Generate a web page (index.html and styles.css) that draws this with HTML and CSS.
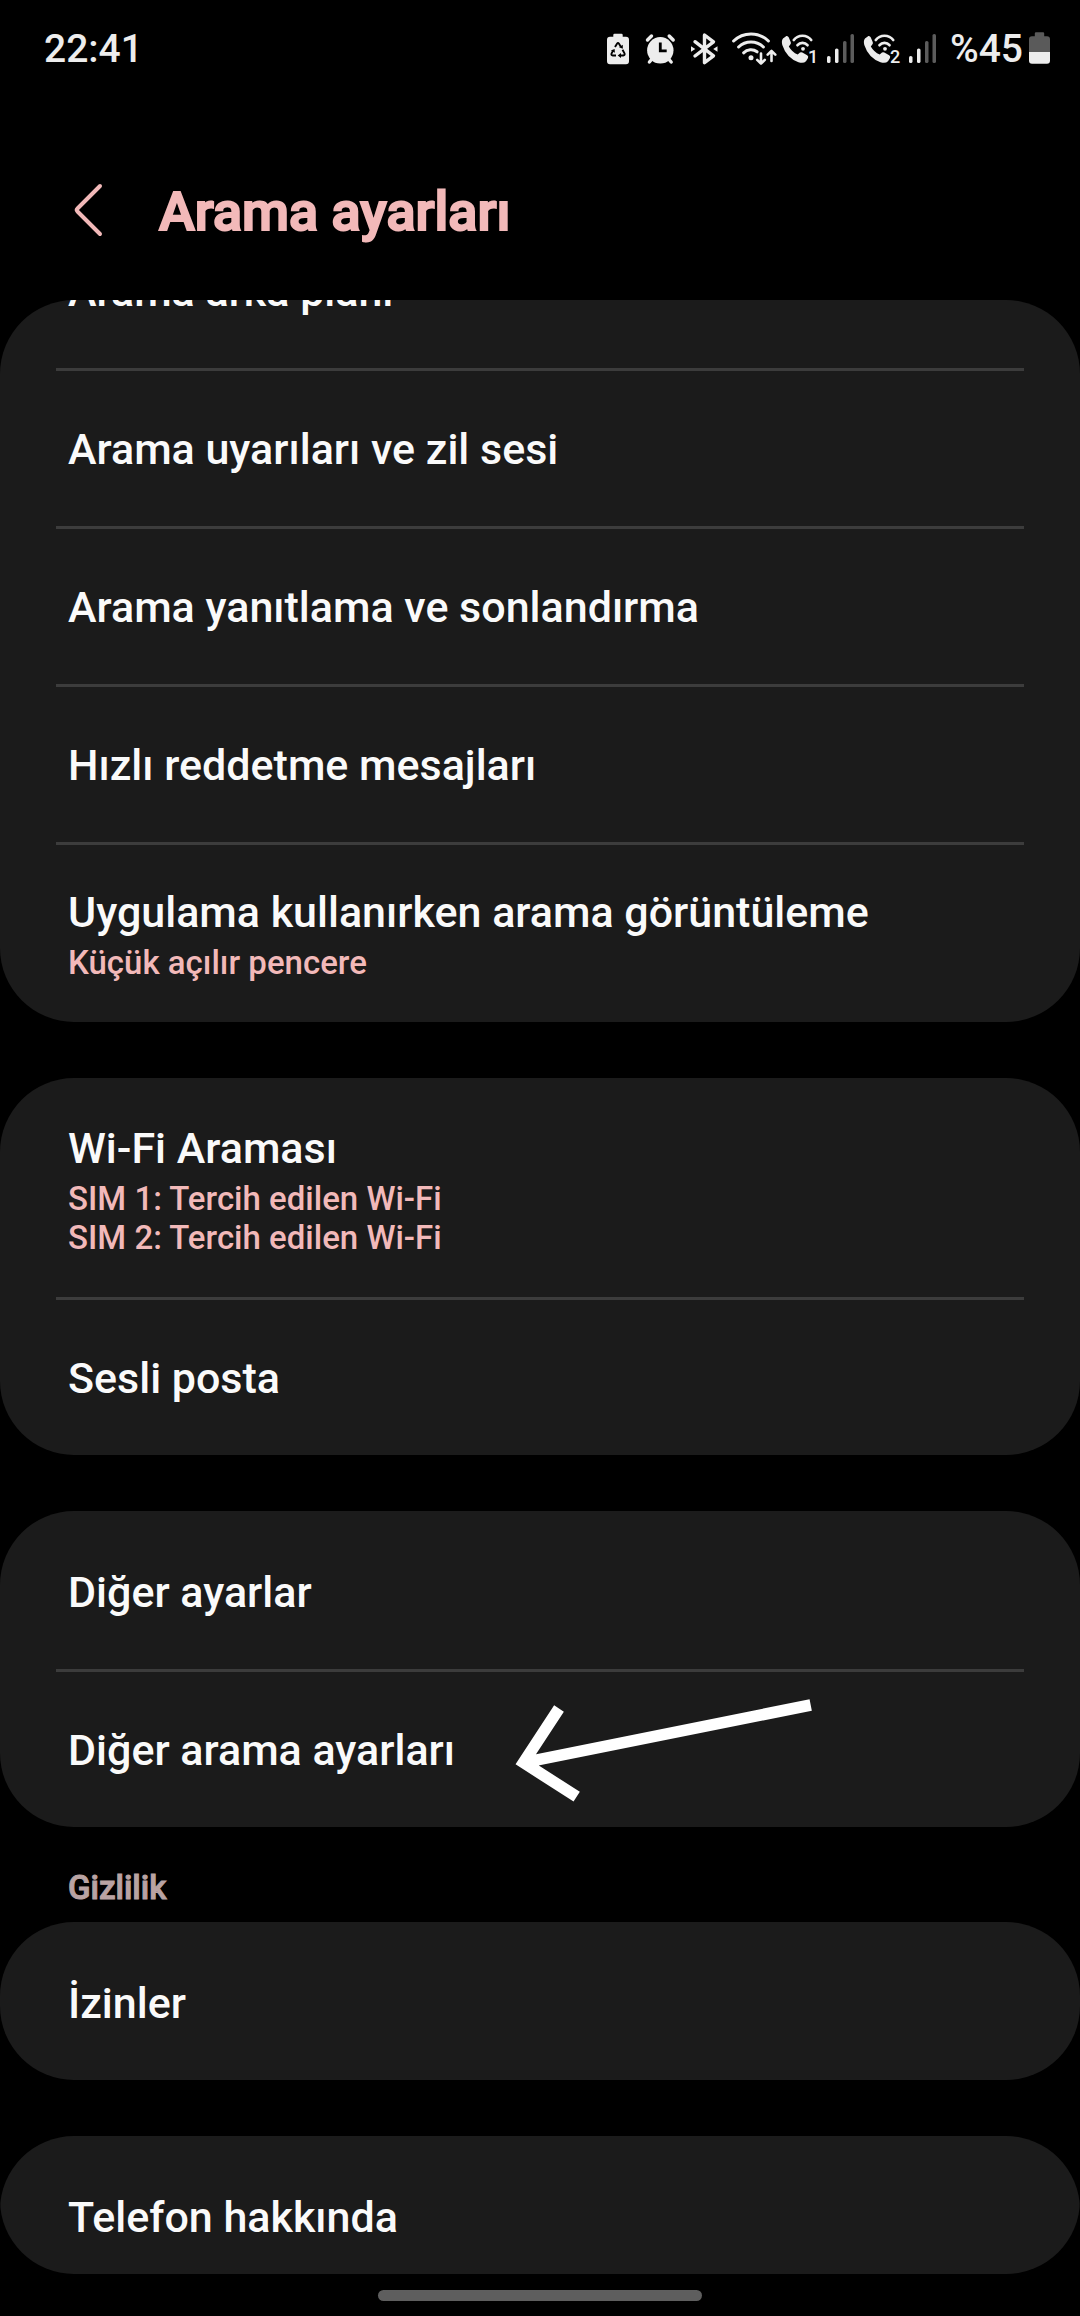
FILE: index.html
```html
<!DOCTYPE html>
<html lang="tr">
<head>
<meta charset="utf-8">
<meta name="viewport" content="width=device-width, initial-scale=1">
<title>Arama ayarları</title>
<link rel="stylesheet" href="styles.css">
</head>
<body>
<svg class="symbols" aria-hidden="true">
  <symbol id="signal" viewBox="0 0 40 40">
    <rect x="5" y="28" width="3.5" height="7" rx="1.6" fill="#ededed"/>
    <rect x="13" y="20.5" width="3.5" height="14.5" rx="1.6" fill="#ededed"/>
    <rect x="21" y="13" width="3.5" height="22" rx="1.6" fill="#5c5c5c"/>
    <rect x="28.5" y="6" width="3.5" height="29" rx="1.6" fill="#5c5c5c"/>
  </symbol>
  <symbol id="wifi-call" viewBox="0 0 42 40">
    <path fill="#ededed" d="M3 10.5 6.4 8Q8 7.600 8.800 9.500L10.800 14.200Q11.200 15.500 10.300 16.500L8.800 18.400Q12 24 17.700 26.500L20 24.600Q21 23.900 22.300 24.500L27.200 27.300Q28.800 28.500 28 30L26 33.300Q23.500 35.800 18.500 34.200 6.500 30 2.300 17 1.200 12.500 3 10.500Z"/>
    <g fill="none" stroke="#ededed" stroke-width="2.700" stroke-linecap="round">
      <path d="M13.800 12a11 11 0 0 1 17.400 0"/>
      <path d="M17.500 17.200a6.600 6.600 0 0 1 10 0"/>
    </g>
    <circle cx="23" cy="20.800" r="1.900" fill="#ededed"/>
  </symbol>
</svg>

<header class="status">
  <time class="status-text">22:41</time>
  <div class="status-icons">
    <svg width="40" height="40" viewBox="0 0 40 40" aria-label="Pil koruma">
      <path fill="#ededed" d="M16.500 5.700h7a1.200 1.200 0 0 1 1.200 1.200v1.800H28a3 3 0 0 1 3 3V33.300a3 3 0 0 1-3 3H12a3 3 0 0 1-3-3V11.700a3 3 0 0 1 3-3h3.300V6.900a1.200 1.200 0 0 1 1.200-1.200Z"/>
      <g fill="none" stroke="#000" stroke-width="1.900">
        <path d="M17 19l2-3.300q1-1.400 2 0l1.800 3"/>
        <path d="M24.500 21.800l2 3.500q.7 2-1.300 2.200h-3.200"/>
        <path d="M18 27.500h-3.200q-2-.2-1.200-2.200l1.700-3"/>
      </g>
      <path d="M24.800 16.800v4l-3.700-1.600ZM23 25v5l-3.300-2.500ZM12.900 22.600l3.700-1.600.3 3.700Z"/>
    </svg>
    <svg width="44" height="40" viewBox="0 0 44 40" aria-label="Alarm">
      <circle cx="22.300" cy="22.300" r="13.200" fill="#ededed"/>
      <path stroke="#ededed" stroke-width="3.400" stroke-linecap="round" d="M9.500 12l4-4M31.200 8l4 4M14 31l-2.600 3M30.600 31l2.600 3"/>
      <path fill="none" stroke="#000" stroke-width="2.800" d="M22.300 14.500v8.300h6.400"/>
    </svg>
    <svg width="44" height="40" viewBox="0 0 44 40" aria-label="Bluetooth">
      <path fill="none" stroke="#ededed" stroke-width="3.400" stroke-linecap="round" stroke-linejoin="round" d="M13 13.700 31.500 27.800 22.500 34.700V7L31.500 13.800 13 28"/>
      <path fill="#ededed" d="M9 18.300l4.300 2.700L9 23.700ZM35.500 18.300 31.200 21l4.300 2.700Z"/>
    </svg>
    <svg width="54" height="40" viewBox="0 0 54 40" aria-label="Wi-Fi">
      <g fill="none" stroke="#ededed" stroke-width="3" stroke-linecap="round">
        <path d="M7.600 13a25 25 0 0 1 34.800 0"/>
        <path d="M12.600 19a17.800 17.800 0 0 1 24.800 0"/>
        <path d="M17.600 24.800a10.600 10.600 0 0 1 13.500-1"/>
      </g>
      <circle cx="25" cy="29.700" r="2.500" fill="#ededed"/>
      <path fill="none" stroke="#ededed" stroke-width="2.600" stroke-linecap="round" stroke-linejoin="round" d="M35 25.500V35.500M31.200 31.800l3.800 3.800 3.800-3.800M45.500 33V23M41.700 26.700l3.800-3.800 3.800 3.800"/>
    </svg>
    <svg width="42" height="40" viewBox="0 0 42 40" aria-label="Wi-Fi araması 1">
      <use href="#wifi-call" width="42" height="40"/>
      <text class="sim" x="28" y="35">1</text>
    </svg>
    <svg width="40" height="40" aria-label="Sinyal 1"><use href="#signal" width="40" height="40"/></svg>
    <svg width="42" height="40" viewBox="0 0 42 40" aria-label="Wi-Fi araması 2">
      <use href="#wifi-call" width="42" height="40"/>
      <text class="sim" x="28" y="35">2</text>
    </svg>
    <svg width="40" height="40" aria-label="Sinyal 2"><use href="#signal" width="40" height="40"/></svg>
    <span class="status-text battery-level">%45</span>
    <svg width="22" height="40" viewBox="0 0 22 40" aria-label="Pil">
      <path fill="#5a5a5a" d="M7 4.300h7a1.200 1.200 0 0 1 1.200 1.200v2.700H18a3 3 0 0 1 3 3V24H0V11.200a3 3 0 0 1 3-3h2.800V5.500A1.200 1.200 0 0 1 7 4.300Z"/>
      <path fill="#ededed" d="M0 24h21v8.800a3 3 0 0 1-3 3H3a3 3 0 0 1-3-3Z"/>
    </svg>
  </div>
</header>

<div class="appbar">
  <button class="back" type="button" aria-label="Geri">
    <svg width="48" height="80" viewBox="0 0 48 80">
      <path fill="none" stroke="#f2b9b9" stroke-width="4" stroke-linecap="round" stroke-linejoin="round" d="M36 14 13.500 36.500Q12 38 13.500 39.500L36 62"/>
    </svg>
  </button>
  <h1>Arama ayarları</h1>
</div>

<main class="list">
  <ul class="card card-scrolled">
    <li><a class="row" href="#">Arama arka planı</a></li>
    <li><a class="row" href="#">Arama uyarıları ve zil sesi</a></li>
    <li><a class="row" href="#">Arama yanıtlama ve sonlandırma</a></li>
    <li><a class="row" href="#">Hızlı reddetme mesajları</a></li>
    <li><a class="row row-detail" href="#">Uygulama kullanırken arama görüntüleme
      <span class="detail">Küçük açılır pencere</span></a></li>
  </ul>
  <ul class="card">
    <li><a class="row row-detail" href="#">Wi-Fi Araması
      <span class="detail">SIM 1: Tercih edilen Wi-Fi<br>SIM 2: Tercih edilen Wi-Fi</span></a></li>
    <li><a class="row" href="#">Sesli posta</a></li>
  </ul>
  <ul class="card">
    <li><a class="row" href="#">Diğer ayarlar</a></li>
    <li><a class="row" href="#">Diğer arama ayarları
      <svg class="pointer" width="306" height="112" viewBox="0 0 306 112" aria-hidden="true">
        <path fill="none" stroke="#fff" stroke-width="11.600" d="M49 13.500 13.600 67.600 66.700 101.700M13.600 67.600 300.700 10"/>
      </svg></a></li>
  </ul>
  <h2>Gizlilik</h2>
  <ul class="card">
    <li><a class="row" href="#">İzinler</a></li>
  </ul>
  <ul class="card card-last">
    <li><a class="row" href="#">Telefon hakkında</a></li>
  </ul>
</main>

<footer class="nav"><div class="handle"></div></footer>
</body>
</html>
```

FILE: styles.css
```css
* {
  box-sizing: border-box;
}

body {
  margin: 0;
  height: 100vh;
  display: flex;
  flex-direction: column;
  background: #000;
  color: #fafafa;
  font-family: Roboto, "Liberation Sans", sans-serif;
  font-weight: 500;
}

svg {
  display: block;
  flex: none;
}

.symbols {
  position: absolute;
  width: 0;
  height: 0;
}

.status {
  flex: none;
  display: flex;
  justify-content: space-between;
  align-items: center;
  padding: 28px 29px 0 44px;
  color: #ededed;
}

.status-text {
  padding-top: 2px;
  font-size: 39px;
  line-height: 38px;
}

.status-icons {
  display: flex;
  align-items: center;
}

.battery-level {
  margin: 0 6px;
}

.sim {
  font-size: 18px;
  fill: #ededed;
}

.appbar {
  flex: none;
  display: flex;
  align-items: center;
  gap: 47px;
  padding: 104px 64px 48px;
  color: #f2b9b9;
}

.back {
  padding: 0;
  border: 0;
  background: none;
}

h1 {
  margin: 0;
  font-size: 54px;
  line-height: 80px;
  font-weight: 500;
  -webkit-text-stroke: 2px currentColor;
}

.list {
  flex: 1;
  min-height: 0;
  overflow-y: auto;
  scrollbar-width: none;
  border-radius: 74px;
}

.card {
  margin: 0 0 56px;
  padding: 0 56px;
  list-style: none;
  background: #1b1b1b;
  border-radius: 74px;
}

/* The list rests part-way down its first row. */
.card-scrolled {
  margin-top: -90px;
}

.card:has(+ h2),
.card-last {
  margin-bottom: 0;
}

.row {
  display: block;
  position: relative;
  padding: 53px 12px 52px;
  border-top: 3px solid #3c3c3c;
  color: inherit;
  font-size: 43px;
  line-height: 50px;
  text-decoration: none;
}

li:first-child .row {
  border-top-color: transparent;
}

.row-detail {
  padding-top: 42px;
  padding-bottom: 40px;
}

.detail {
  display: block;
  margin-top: 6px;
  color: #f2b9b9;
  font-size: 33px;
  line-height: 39px;
}

h2 {
  margin: 0;
  padding: 41px 68px 15px;
  color: #b9a3a3;
  font-size: 33px;
  line-height: 39px;
  font-weight: 500;
  -webkit-text-stroke: 1px currentColor;
}

/* Hand-drawn arrow laid over the row it points at. */
.pointer {
  position: absolute;
  left: 454px;
  top: 23px;
}

.nav {
  flex: none;
  padding: 16px 0 15px;
}

.handle {
  width: 30%;
  height: 11px;
  margin: 0 auto;
  border-radius: 6px;
  background: #5e5e5e;
}
```
